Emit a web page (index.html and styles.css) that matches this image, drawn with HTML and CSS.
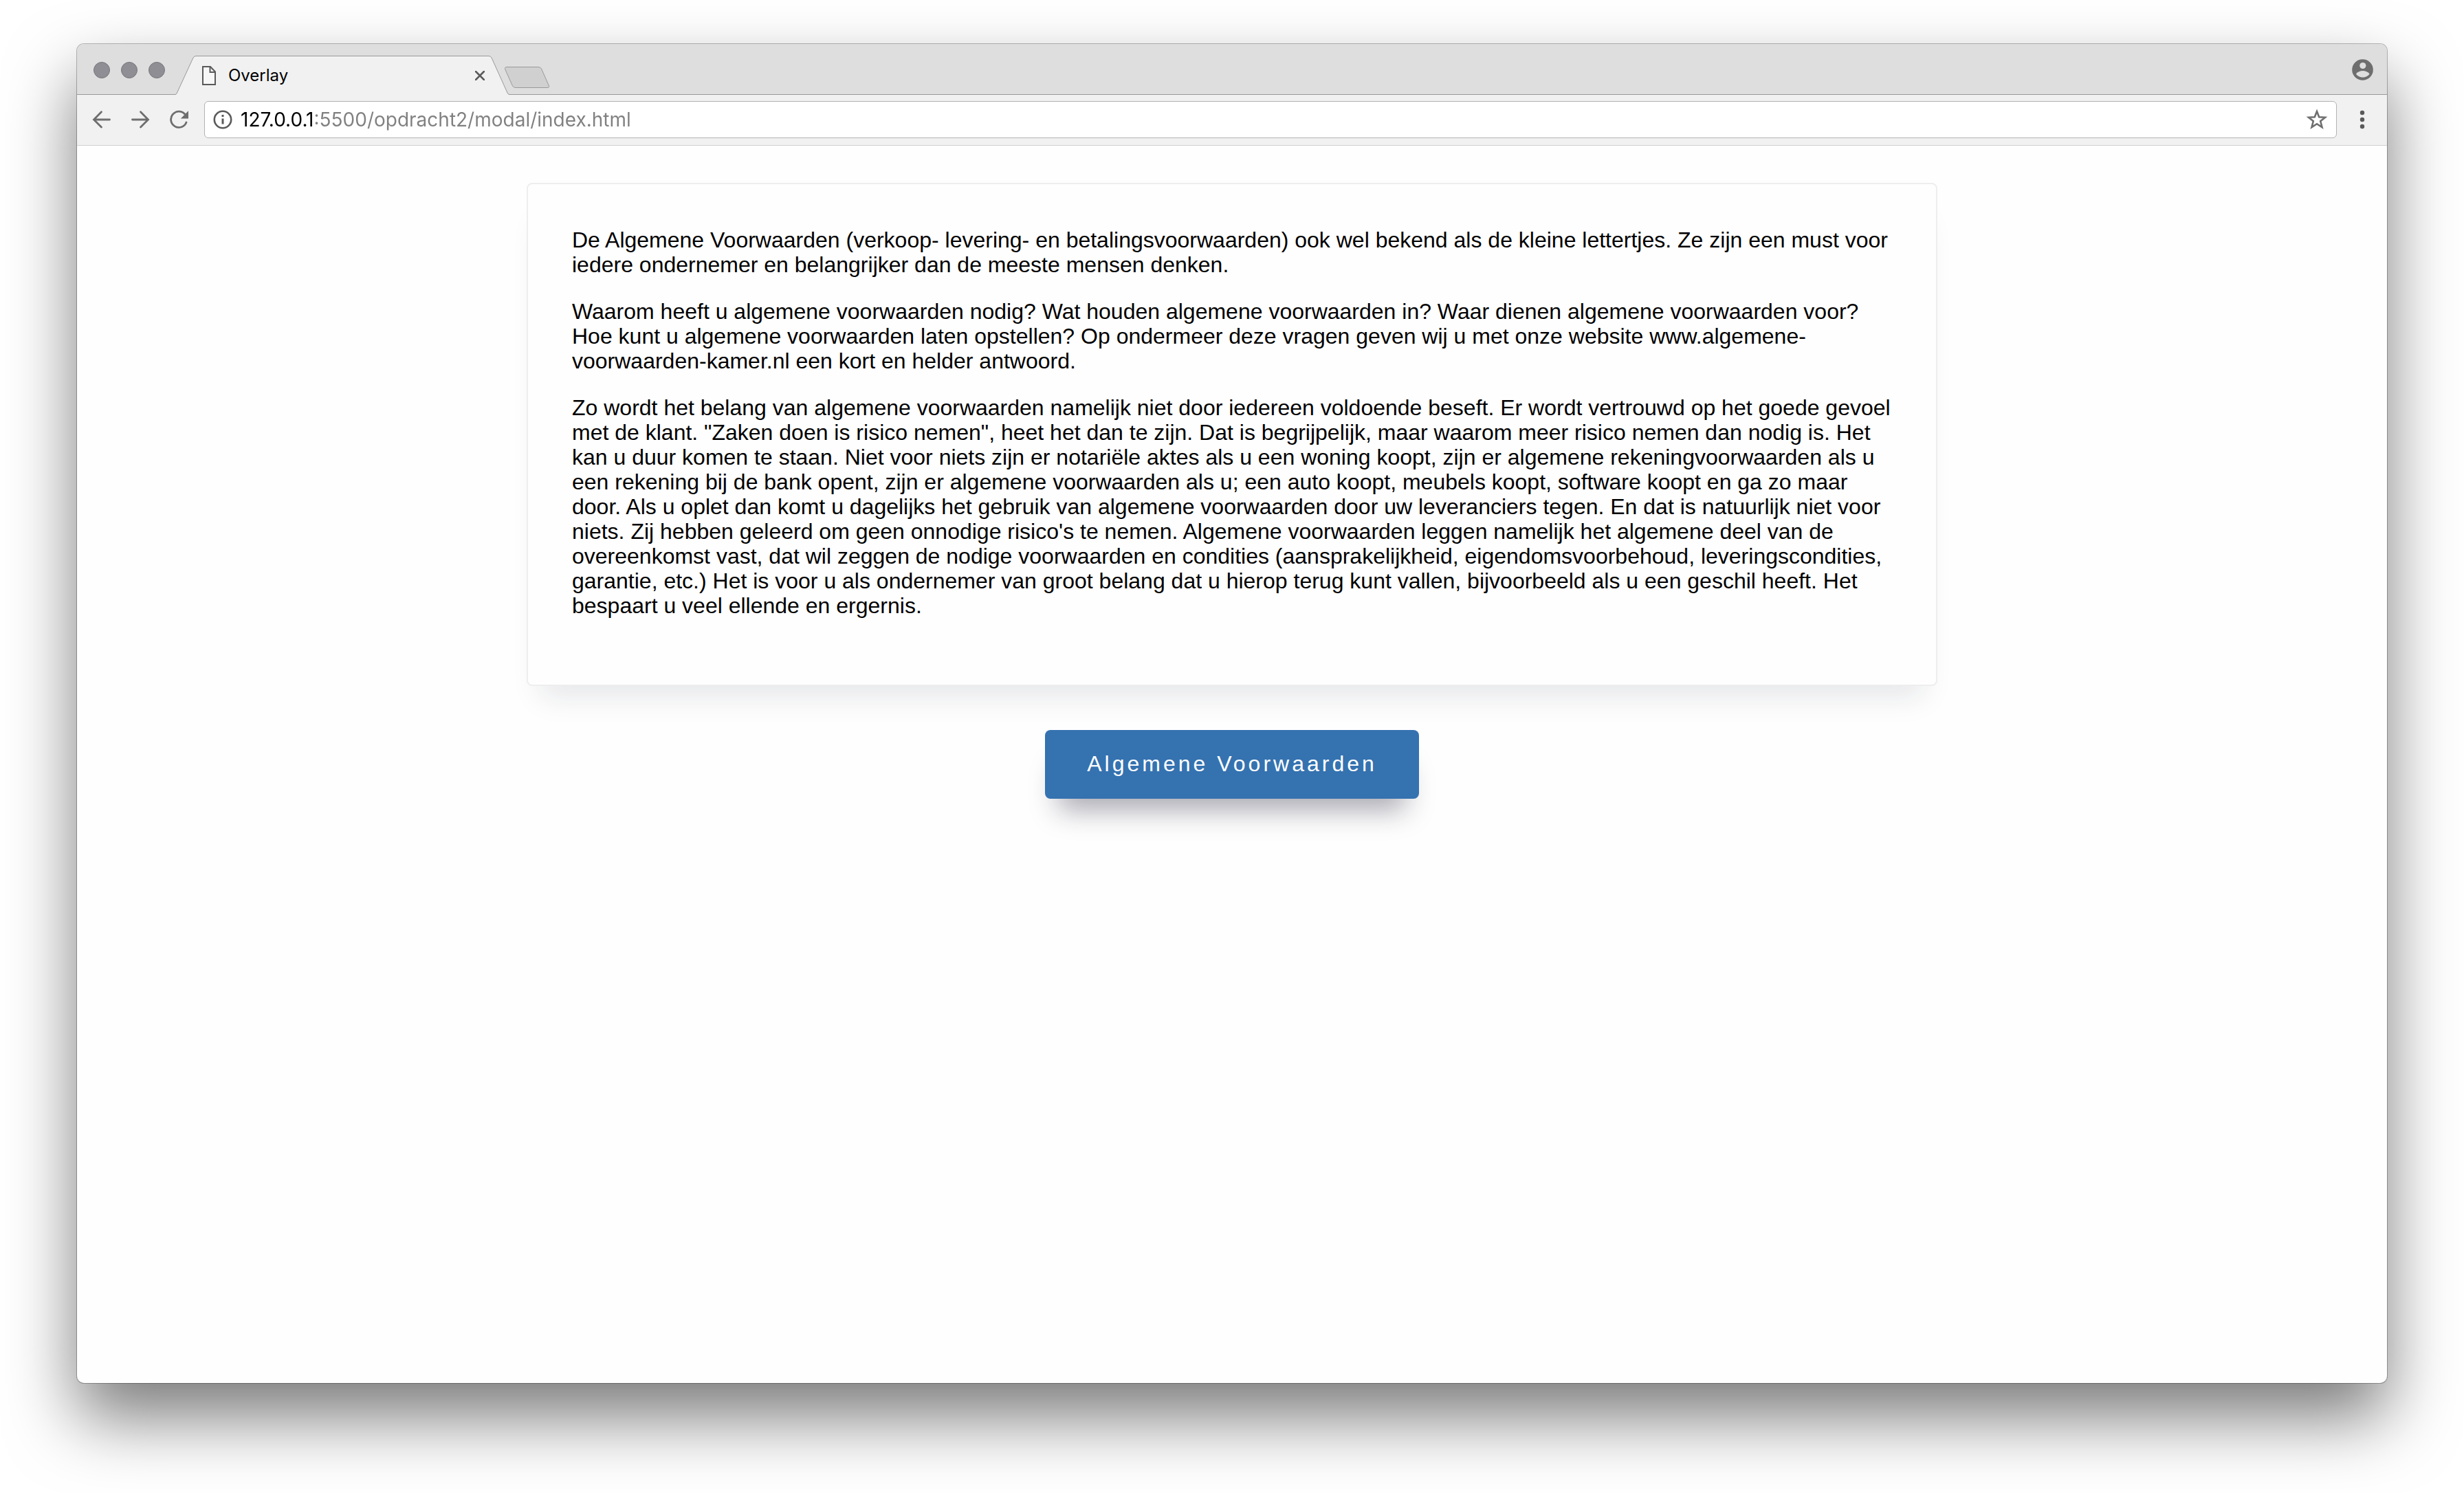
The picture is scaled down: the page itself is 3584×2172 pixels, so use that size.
FILE: index.html
```html
<!DOCTYPE html>
<html lang="nl">
<head>
  <meta charset="utf-8">
  <meta name="viewport" content="width=device-width, initial-scale=1">
  <title>Overlay</title>
  <link rel="stylesheet" href="styles.css">
</head>
<body>
  <div class="window">
    <header class="tab-strip">
      <div class="lights">
        <span class="light"></span>
        <span class="light"></span>
        <span class="light"></span>
      </div>
      <div class="tab">
        <svg class="tab-shape" width="486" height="57" viewBox="0 0 486 57" aria-hidden="true">
          <path d="M0 57L0 56.500Q1.500 56.500 2.500 54L26 3Q27.500 .5 30 .5H456Q458.500 .5 460 3L483 54Q484 56.500 486 56.500V57Z" fill="#f1f1f1"/>
          <path d="M0 56.500Q1.500 56.500 2.500 54L26 3Q27.500 .5 30 .5H456Q458.500 .5 460 3L483 54Q484 56.500 486 56.500" fill="none" stroke="#999"/>
        </svg>
        <svg class="tab-page" width="20" height="28" viewBox="0 0 20 28" aria-hidden="true">
          <path d="M1 1H12L19 8.500V27H1Z" fill="#f7f7f7" stroke="#5a5a5a" stroke-width="2"/>
          <path d="M11.500 1V9H19" fill="none" stroke="#5a5a5a" stroke-width="2"/>
        </svg>
        <span class="tab-title">Overlay</span>
        <button class="tab-close" type="button" aria-label="Tabblad sluiten">
          <svg width="14" height="14" viewBox="0 0 14 14"><path d="M1 1L13 13M13 1L1 13" stroke="#5a5a5a" stroke-width="2.500" stroke-linecap="round"/></svg>
        </button>
      </div>
      <button class="new-tab" type="button" aria-label="Nieuw tabblad">
        <svg width="66" height="32" viewBox="0 0 66 32"><path d="M3 .5H49Q52 .5 53.500 3L64.500 28Q65.500 30.500 62 30.500H16Q13 30.500 11.500 28L.8 4Q-.2 .5 3 .5Z" fill="#d0d0d0" stroke="#999"/></svg>
      </button>
      <button class="icon-button profile" type="button" aria-label="Profiel">
        <svg width="31" height="31" viewBox="0 0 31 31"><circle cx="15.500" cy="15.500" r="15.300" fill="#6e6e6e"/><circle cx="15.800" cy="9.500" r="4.600" fill="#dedede"/><path d="M6 21.500C8 18.500 12 17 15.800 17S23.500 18.500 25.500 21.500C23.500 25 19.500 26.500 15.800 26.500S8 25 6 21.500Z" fill="#dedede"/></svg>
      </button>
    </header>

    <nav class="toolbar">
      <button class="icon-button" type="button" aria-label="Vorige">
        <svg width="32" height="32" viewBox="0 0 32 32"><path d="M27.500 16H5M15.500 4.800L4.500 16L15.500 27" fill="none" stroke="#6e6e6e" stroke-width="2.800" stroke-linecap="round"/></svg>
      </button>
      <button class="icon-button" type="button" aria-label="Volgende">
        <svg width="32" height="32" viewBox="0 0 32 32"><path d="M4.500 16H27M16.500 4.800L27.500 16L16.500 27" fill="none" stroke="#6e6e6e" stroke-width="2.800" stroke-linecap="round"/></svg>
      </button>
      <button class="icon-button" type="button" aria-label="Vernieuwen">
        <svg width="32" height="32" viewBox="0 0 32 32"><path d="M27 20A11.600 11.600 0 1 1 24.600 7.800" fill="none" stroke="#6e6e6e" stroke-width="2.800" stroke-linecap="round"/><path d="M30 3.300V14.500H18.800Z" fill="#6e6e6e"/></svg>
      </button>
      <div class="address">
        <svg class="address-icon" width="28" height="28" viewBox="0 0 28 28" aria-hidden="true"><circle cx="14" cy="14" r="12.200" fill="none" stroke="#5a5a5a" stroke-width="2.600"/><path d="M12.500 7H15.500V10H12.500ZM12.500 12.500H15.500V20.500H12.500Z" fill="#5a5a5a"/></svg>
        <input class="address-input" type="text" aria-label="Adres" value="127.0.0.1:5500/opdracht2/modal/index.html">
        <button class="icon-button" type="button" aria-label="Bladwijzer toevoegen">
          <svg width="32" height="32" viewBox="0 0 32 32"><path d="M16 4L19.200 12.200L28 12.800L21.200 18.300L23.500 27L16 22.200L8.500 27L10.800 18.300L4 12.800L12.800 12.200Z" fill="none" stroke="#6e6e6e" stroke-width="2.600"/></svg>
        </button>
      </div>
      <button class="icon-button" type="button" aria-label="Menu">
        <svg width="32" height="32" viewBox="0 0 32 32"><g fill="#5a5a5a"><circle cx="16" cy="6" r="3.200"/><circle cx="16" cy="16" r="3.200"/><circle cx="16" cy="26" r="3.200"/></g></svg>
      </button>
    </nav>

    <main class="page">
      <article class="card">
        <p>De Algemene Voorwaarden (verkoop- levering- en betalingsvoorwaarden) ook wel bekend als de kleine lettertjes. Ze zijn een must voor iedere ondernemer en belangrijker dan de meeste mensen denken.</p>
        <p>Waarom heeft u algemene voorwaarden nodig? Wat houden algemene voorwaarden in? Waar dienen algemene voorwaarden voor? Hoe kunt u algemene voorwaarden laten opstellen? Op ondermeer deze vragen geven wij u met onze website www.algemene-voorwaarden-kamer.nl een kort en helder antwoord.</p>
        <p>Zo wordt het belang van algemene voorwaarden namelijk niet door iedereen voldoende beseft. Er wordt vertrouwd op het goede gevoel met de klant. "Zaken doen is risico nemen", heet het dan te zijn. Dat is begrijpelijk, maar waarom meer risico nemen dan nodig is. Het kan u duur komen te staan. Niet voor niets zijn er notariële aktes als u een woning koopt, zijn er algemene rekeningvoorwaarden als u een rekening bij de bank opent, zijn er algemene voorwaarden als u; een auto koopt, meubels koopt, software koopt en ga zo maar door. Als u oplet dan komt u dagelijks het gebruik van algemene voorwaarden door uw leveranciers tegen. En dat is natuurlijk niet voor niets. Zij hebben geleerd om geen onnodige risico's te nemen. Algemene voorwaarden leggen namelijk het algemene deel van de overeenkomst vast, dat wil zeggen de nodige voorwaarden en condities (aansprakelijkheid, eigendomsvoorbehoud, leveringscondities, garantie, etc.) Het is voor u als ondernemer van groot belang dat u hierop terug kunt vallen, bijvoorbeeld als u een geschil heeft. Het bespaart u veel ellende en ergernis.</p>
      </article>
      <button class="cta" type="button">Algemene Voorwaarden</button>
    </main>
  </div>
</body>
</html>
```
FILE: styles.css
```css
*,
*::before,
*::after {
  box-sizing: border-box;
}

body {
  display: flex;
  min-height: 100vh;
  margin: 0;
  padding: 64px 112px 160px;
  background: #fff;
  color: #000;
  font-family: "Liberation Sans", Arial, sans-serif;
}

button {
  padding: 0;
  border: 0;
  background: none;
  cursor: pointer;
}

svg {
  display: block;
}

.window {
  display: flex;
  flex: 1;
  flex-direction: column;
  min-width: 0;
  border-radius: 10px;
  background: #fefefe;
  box-shadow: 0 0 0 1px rgba(0, 0, 0, 0.27), 0 50px 100px rgba(0, 0, 0, 0.52);
}

/* Tab strip */
.tab-strip {
  display: flex;
  align-items: flex-end;
  height: 74px;
  padding: 2px 20px 0 24px;
  border-bottom: 1px solid #999;
  border-radius: 10px 10px 0 0;
  background: #dedede;
  font-family: Inter, sans-serif;
}

.lights {
  display: flex;
  align-self: center;
  gap: 16px;
}

.light {
  width: 24px;
  height: 24px;
  border: 1px solid #77767b;
  border-radius: 50%;
  background: #8f8e94;
}

.tab {
  position: relative;
  display: flex;
  align-items: center;
  width: 486px;
  height: 57px;
  margin: 0 0 -1px 15px;
  padding: 0 36px 0 39px;
}

.tab-shape {
  position: absolute;
  inset: 0;
}

.tab-page,
.tab-title,
.tab-close {
  position: relative;
}

.tab-title {
  flex: 1;
  margin-left: 18px;
  font-size: 24px;
  line-height: 32px;
}

.new-tab {
  margin: 0 0 8px -7px;
}

.icon-button {
  display: flex;
  flex: none;
  align-items: center;
  justify-content: center;
  width: 32px;
  height: 32px;
}

.profile {
  align-self: center;
  margin-left: auto;
}

/* Toolbar */
.toolbar {
  display: flex;
  align-items: center;
  gap: 24px;
  padding: 9px 20px 10px;
  border-bottom: 1px solid #cfcfcf;
  background: #f1f1f1;
}

.address {
  display: flex;
  flex: 1;
  align-items: center;
  min-width: 0;
  height: 54px;
  margin: 0 -3px;
  padding: 0 12px;
  border: 1px solid #b3b3b3;
  border-radius: 6px;
  background: #fff;
}

.address-icon {
  flex: none;
}

/* The host part of the address is black, the rest grey */
.address-input {
  flex: 1;
  min-width: 0;
  height: 40px;
  margin: 0 12px;
  padding: 0;
  border: 0;
  outline: 0;
  background: linear-gradient(to right, #000 108px, #808080 108px);
  background-clip: text;
  -webkit-background-clip: text;
  color: #808080;
  -webkit-text-fill-color: transparent;
  font-family: Inter, sans-serif;
  font-size: 28px;
}

/* Page */
.page {
  display: flex;
  flex: 1;
  flex-direction: column;
  align-items: center;
  gap: 64px;
  padding: 54px 64px 64px;
}

.card {
  width: 100%;
  max-width: 2052px;
  padding: 63px 64px 97px;
  border: 2px solid #eee;
  border-radius: 8px;
  background: #fefefe;
  box-shadow: 0 36px 40px -20px rgba(20, 30, 50, 0.1);
  font-size: 32px;
  line-height: 36px;
}

.card p {
  margin: 0;
}

.card p + p {
  margin-top: 32px;
}

.cta {
  padding: 0 61px 2px;
  border-radius: 8px;
  background: #3572b0;
  box-shadow: 0 36px 40px -20px rgba(25, 25, 50, 0.38);
  color: #fff;
  font-family: inherit;
  font-size: 32px;
  line-height: 98px;
  letter-spacing: 4px;
}
```
